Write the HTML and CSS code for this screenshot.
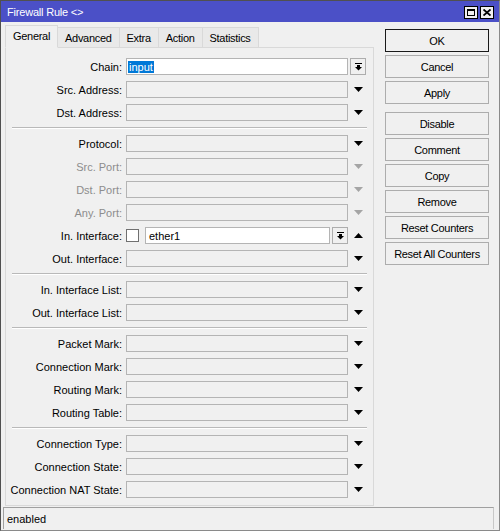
FILE: index.html
```html
<!DOCTYPE html>
<html>
<head>
<meta charset="utf-8">
<title>Firewall Rule</title>
<link rel="stylesheet" href="styles.css">
</head>
<body>
<div class="window">
  <div class="titlebar">
    <span class="title">Firewall Rule &lt;&gt;</span>
    <div class="tb-btns">
      <span class="tb-btn"><span class="max-icon"></span></span>
      <span class="tb-btn"><svg width="8" height="7" viewBox="0 0 8 7"><path d="M0.5 0.5 L7.5 6.5 M7.5 0.5 L0.5 6.5" stroke="#000" stroke-width="1.8"/></svg></span>
    </div>
  </div>
  <div class="content">
    <div class="tabs">
      <div class="tabstrip">
        <div class="tab active">General</div>
        <div class="tab">Advanced</div>
        <div class="tab">Extra</div>
        <div class="tab">Action</div>
        <div class="tab">Statistics</div>
        <div class="tab-fill"></div>
      </div>
      <div class="panel">
        <div class="group">
          <div class="row"><span class="lbl">Chain:</span><span class="field white"><span class="sel">input</span></span><span class="arrow left"><span class="ddbtn"><svg width="7" height="8" viewBox="0 0 7 8"><rect x="0" y="0" width="7" height="1" fill="#000"/><rect x="2" y="2" width="3" height="2" fill="#000"/><polygon points="0,4 7,4 3.5,7.5" fill="#000"/></svg></span></span></div>
          <div class="row"><span class="lbl">Src. Address:</span><span class="field"></span><span class="arrow"><svg class="tri" width="9" height="5" viewBox="0 0 9 5"><polygon points="0,0 9,0 4.5,5"/></svg></span></div>
          <div class="row"><span class="lbl">Dst. Address:</span><span class="field"></span><span class="arrow"><svg class="tri" width="9" height="5" viewBox="0 0 9 5"><polygon points="0,0 9,0 4.5,5"/></svg></span></div>
        </div>
        <div class="sep"></div>
        <div class="group">
          <div class="row"><span class="lbl">Protocol:</span><span class="field"></span><span class="arrow"><svg class="tri" width="9" height="5" viewBox="0 0 9 5"><polygon points="0,0 9,0 4.5,5"/></svg></span></div>
          <div class="row disabled"><span class="lbl">Src. Port:</span><span class="field"></span><span class="arrow"><svg class="tri" width="9" height="5" viewBox="0 0 9 5"><polygon points="0,0 9,0 4.5,5"/></svg></span></div>
          <div class="row disabled"><span class="lbl">Dst. Port:</span><span class="field"></span><span class="arrow"><svg class="tri" width="9" height="5" viewBox="0 0 9 5"><polygon points="0,0 9,0 4.5,5"/></svg></span></div>
          <div class="row disabled"><span class="lbl">Any. Port:</span><span class="field"></span><span class="arrow"><svg class="tri" width="9" height="5" viewBox="0 0 9 5"><polygon points="0,0 9,0 4.5,5"/></svg></span></div>
          <div class="row"><span class="lbl">In. Interface:</span><span class="check"></span><span class="field white short">ether1</span><span class="ddbtn"><svg width="7" height="8" viewBox="0 0 7 8"><rect x="0" y="0" width="7" height="1" fill="#000"/><rect x="2" y="2" width="3" height="2" fill="#000"/><polygon points="0,4 7,4 3.5,7.5" fill="#000"/></svg></span><span class="arrow"><svg class="tri" width="9" height="5" viewBox="0 0 9 5"><polygon points="0,5 9,5 4.5,0"/></svg></span></div>
          <div class="row"><span class="lbl">Out. Interface:</span><span class="field"></span><span class="arrow"><svg class="tri" width="9" height="5" viewBox="0 0 9 5"><polygon points="0,0 9,0 4.5,5"/></svg></span></div>
        </div>
        <div class="sep"></div>
        <div class="group">
          <div class="row"><span class="lbl">In. Interface List:</span><span class="field"></span><span class="arrow"><svg class="tri" width="9" height="5" viewBox="0 0 9 5"><polygon points="0,0 9,0 4.5,5"/></svg></span></div>
          <div class="row"><span class="lbl">Out. Interface List:</span><span class="field"></span><span class="arrow"><svg class="tri" width="9" height="5" viewBox="0 0 9 5"><polygon points="0,0 9,0 4.5,5"/></svg></span></div>
        </div>
        <div class="sep"></div>
        <div class="group">
          <div class="row"><span class="lbl">Packet Mark:</span><span class="field"></span><span class="arrow"><svg class="tri" width="9" height="5" viewBox="0 0 9 5"><polygon points="0,0 9,0 4.5,5"/></svg></span></div>
          <div class="row"><span class="lbl">Connection Mark:</span><span class="field"></span><span class="arrow"><svg class="tri" width="9" height="5" viewBox="0 0 9 5"><polygon points="0,0 9,0 4.5,5"/></svg></span></div>
          <div class="row"><span class="lbl">Routing Mark:</span><span class="field"></span><span class="arrow"><svg class="tri" width="9" height="5" viewBox="0 0 9 5"><polygon points="0,0 9,0 4.5,5"/></svg></span></div>
          <div class="row"><span class="lbl">Routing Table:</span><span class="field"></span><span class="arrow"><svg class="tri" width="9" height="5" viewBox="0 0 9 5"><polygon points="0,0 9,0 4.5,5"/></svg></span></div>
        </div>
        <div class="sep"></div>
        <div class="group">
          <div class="row"><span class="lbl">Connection Type:</span><span class="field"></span><span class="arrow"><svg class="tri" width="9" height="5" viewBox="0 0 9 5"><polygon points="0,0 9,0 4.5,5"/></svg></span></div>
          <div class="row"><span class="lbl">Connection State:</span><span class="field"></span><span class="arrow"><svg class="tri" width="9" height="5" viewBox="0 0 9 5"><polygon points="0,0 9,0 4.5,5"/></svg></span></div>
          <div class="row"><span class="lbl">Connection NAT State:</span><span class="field"></span><span class="arrow"><svg class="tri" width="9" height="5" viewBox="0 0 9 5"><polygon points="0,0 9,0 4.5,5"/></svg></span></div>
        </div>
      </div>
    </div>
    <div class="buttons">
      <div class="btn default">OK</div>
      <div class="btn">Cancel</div>
      <div class="btn spaced">Apply</div>
      <div class="btn">Disable</div>
      <div class="btn">Comment</div>
      <div class="btn">Copy</div>
      <div class="btn">Remove</div>
      <div class="btn">Reset Counters</div>
      <div class="btn">Reset All Counters</div>
    </div>
  </div>
  <div class="status">enabled</div>
</div>
</body>
</html>
```
FILE: styles.css
```css
body {
  margin: 0;
  background: #fff;
}

.window {
  width: 500px;
  height: 531px;
  box-sizing: border-box;
  border: 1px solid #505050;
  border-right-color: #8a8a8a;
  border-bottom-color: #8a8a8a;
  background: #f0f0f0;
  display: flex;
  flex-direction: column;
  font-family: "Liberation Sans", Arial, sans-serif;
  font-size: 11px;
  color: #000;
}

.titlebar {
  height: 21px;
  flex: none;
  box-sizing: border-box;
  background: #4b50c7;
  display: flex;
  align-items: center;
  justify-content: space-between;
  padding: 1px 5px 0 6px;
}

.title {
  color: #fff;
  letter-spacing: -0.2px;
}

.tb-btns {
  display: flex;
  gap: 2px;
}

.tb-btn {
  width: 14px;
  height: 13px;
  box-sizing: border-box;
  border: 1px solid #000;
  background: #f0f0f0;
  display: flex;
  align-items: center;
  justify-content: center;
}

.max-icon {
  width: 8px;
  height: 7px;
  box-sizing: border-box;
  border: 1px solid #000;
  border-top-width: 2px;
}

.content {
  flex: 1;
  min-height: 0;
  display: flex;
  gap: 11px;
  padding: 3px 0 0 4px;
}

.tabs {
  width: 369px;
  display: flex;
  flex-direction: column;
}

.tabstrip {
  display: flex;
  align-items: flex-end;
  height: 23px;
  flex: none;
}

.tab {
  height: 21px;
  box-sizing: border-box;
  padding: 0 7px;
  border-top: 1px solid #d9d9d9;
  border-right: 1px solid #d9d9d9;
  border-bottom: 1px solid #d9d9d9;
  background: #e9e9e9;
  display: flex;
  align-items: center;
  letter-spacing: -0.3px;
}

.tab.active {
  height: 23px;
  padding-bottom: 2px;
  background: #f0f0f0;
  border-left: 1px solid #d9d9d9;
  border-bottom-color: #f0f0f0;
}

.tab-fill {
  flex: 1;
  align-self: stretch;
  border-bottom: 1px solid #d9d9d9;
}

.panel {
  flex: 1;
  border: 1px solid #d9d9d9;
  border-top: none;
  padding: 10px 4px 0 0;
  display: flex;
  flex-direction: column;
}

.group {
  display: flex;
  flex-direction: column;
  gap: 6px;
}

.row {
  display: flex;
  align-items: center;
  height: 17px;
}

.lbl {
  width: 116px;
  margin-right: 4px;
  text-align: right;
  white-space: nowrap;
}

.row.disabled .lbl {
  color: #8d8d8d;
}

.field {
  width: 222px;
  height: 17px;
  box-sizing: border-box;
  border: 1px solid #b4b4b4;
  background: #f0f0f0;
  display: flex;
  align-items: center;
  padding-left: 1px;
}

.field.white {
  background: #fff;
}

.field.short {
  width: 185px;
  padding-left: 3px;
}

.sel {
  background: #0078d7;
  color: #fff;
  line-height: 12px;
  padding: 0 1px;
}

.arrow {
  width: 20px;
  height: 17px;
  display: flex;
  align-items: center;
  justify-content: center;
}

.arrow.left {
  justify-content: flex-start;
}

.tri {
  fill: #000;
}

.row.disabled .tri {
  fill: #a5a5a5;
}

.ddbtn {
  width: 16px;
  height: 17px;
  box-sizing: border-box;
  border: 1px solid #adadad;
  background: #f0f0f0;
  display: flex;
  align-items: center;
  justify-content: center;
  margin-left: 2px;
}

.check {
  width: 13px;
  height: 13px;
  box-sizing: border-box;
  border: 1px solid #707070;
  background: #fff;
  margin-right: 6px;
}

.sep {
  margin: 6px 2px 6px 6px;
  border-top: 1px solid #b9b9b9;
  border-bottom: 1px solid #fff;
}

.buttons {
  width: 104px;
  display: flex;
  flex-direction: column;
  gap: 3px;
  padding-top: 4px;
}

.btn {
  height: 23px;
  box-sizing: border-box;
  border: 1px solid #adadad;
  background: #f0f0f0;
  display: flex;
  align-items: center;
  justify-content: center;
  white-space: nowrap;
  letter-spacing: -0.3px;
}

.btn.default {
  border-color: #1a1a1a;
}

.btn.spaced {
  margin-bottom: 5px;
}

.status {
  height: 22px;
  flex: none;
  box-sizing: border-box;
  margin: 1px 5px 1px 2px;
  border: 1px solid #a0a0a0;
  border-right-color: #c8c8c8;
  border-bottom: none;
  padding-left: 3px;
  display: flex;
  align-items: center;
}
```
